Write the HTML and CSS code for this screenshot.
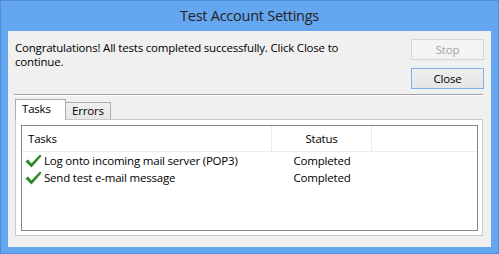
FILE: index.html
```html
<!DOCTYPE html>
<html lang="en">
<head>
  <meta charset="UTF-8" />
  <title>Test Account Settings</title>
  <link rel="stylesheet" href="styles.css">
</head>
<body>
  <div class="window">
    <div class="titlebar">Test Account Settings</div>
    <div class="client">
      <div class="top">
        <p class="message">Congratulations! All tests completed successfully. Click Close to<br>continue.</p>
        <div class="buttons">
          <button class="btn" disabled>Stop</button>
          <button class="btn default">Close</button>
        </div>
      </div>
      <div class="separator"></div>
      <div class="tabs">
        <div class="tab selected">Tasks</div>
        <div class="tab">Errors</div>
      </div>
      <div class="tabpage">
        <div class="listview">
          <div class="lv-header">
            <div class="col col-task">Tasks</div>
            <div class="col col-status">Status</div>
            <div class="col col-rest"></div>
          </div>
          <div class="lv-row">
            <div class="col col-task">
              <svg class="check" width="17" height="14" viewBox="0 0 17 14"><path d="M0.5 7.6 L3 5.6 L6.4 9.4 L15 0.6 L16.6 2 L6.5 13.4 Z" /></svg>
              Log onto incoming mail server (POP3)
            </div>
            <div class="col col-status">Completed</div>
          </div>
          <div class="lv-row">
            <div class="col col-task">
              <svg class="check" width="17" height="14" viewBox="0 0 17 14"><path d="M0.5 7.6 L3 5.6 L6.4 9.4 L15 0.6 L16.6 2 L6.5 13.4 Z" /></svg>
              Send test e-mail message
            </div>
            <div class="col col-status">Completed</div>
          </div>
        </div>
      </div>
    </div>
  </div>
</body>
</html>
```

FILE: styles.css
```css
body {
  margin: 0;
  font-family: "Open Sans", sans-serif;
  font-size: 11.5px;
  letter-spacing: -0.2px;
  color: #000;
}
.window {
  box-sizing: border-box;
  width: 499px;
  height: 254px;
  background: #65a6f0;
  border: 1px solid #4f8ddb;
  display: flex;
  flex-direction: column;
}
.titlebar {
  height: 30px;
  line-height: 29px;
  text-align: center;
  font-size: 14.5px;
  letter-spacing: -0.25px;
  color: #222;
}
.client {
  height: 216px;
  margin: 0 7px;
  background: #f0f0f0;
  padding: 8px 7px 0 7px;
  box-sizing: border-box;
}
.top {
  display: flex;
  justify-content: space-between;
}
.message {
  margin: 2px 0 0 0;
  line-height: 14px;
}
.buttons {
  display: flex;
  flex-direction: column;
  gap: 8px;
}
.btn {
  width: 73px;
  height: 21px;
  font-family: inherit;
  font-size: 11.5px;
  letter-spacing: -0.2px;
  color: #000;
  background: linear-gradient(#efefef, #e5e5e5);
  border: 1px solid #acacac;
  padding: 0;
}
.btn:disabled {
  background: #f4f4f4;
  border-color: #d5d5d5;
  color: #a3a3a3;
}
.btn.default {
  border-color: #7eb4ea;
}
.separator {
  margin: 5px 1px 0 -1px;
  border-top: 1px solid #a0a0a0;
  border-bottom: 1px solid #fff;
}
.tabs {
  display: flex;
  align-items: flex-end;
  margin-top: 3px;
  height: 20px;
}
.tab {
  box-sizing: border-box;
  height: 17px;
  padding: 0 6px;
  border: 1px solid #acacac;
  border-bottom: none;
  background: linear-gradient(#f0f0f0, #e5e5e5);
  line-height: 15px;
  margin-left: -1px;
}
.tab.selected {
  height: 21px;
  width: 51px;
  margin-left: 0;
  margin-bottom: -1px;
  background: #fff;
  line-height: 17px;
  position: relative;
  z-index: 1;
}
.tabpage {
  height: 117px;
  box-sizing: border-box;
  margin-right: 1px;
  border: 1px solid #c9c9c9;
  background: #fff;
  padding: 5px 4px 4px 5px;
}
.listview {
  height: 100%;
  box-sizing: border-box;
  border: 1px solid #828790;
}
.lv-header {
  display: flex;
  height: 25px;
  border-bottom: 1px solid #e7ecf3;
}
.lv-header .col {
  line-height: 26px;
  border-right: 1px solid #e7ecf3;
}
.lv-header .col-rest {
  flex: 1;
  border-right: none;
}
.col-task {
  box-sizing: border-box;
  width: 250px;
  padding-left: 6px;
  display: flex;
  align-items: center;
}
.col-status {
  box-sizing: border-box;
  width: 100px;
  text-align: center;
}
.lv-row {
  display: flex;
  height: 17px;
  line-height: 17px;
}
.lv-row .col-task {
  padding-left: 3px;
  gap: 2px;
}
.check {
  fill: #2c8a24;
}
```
